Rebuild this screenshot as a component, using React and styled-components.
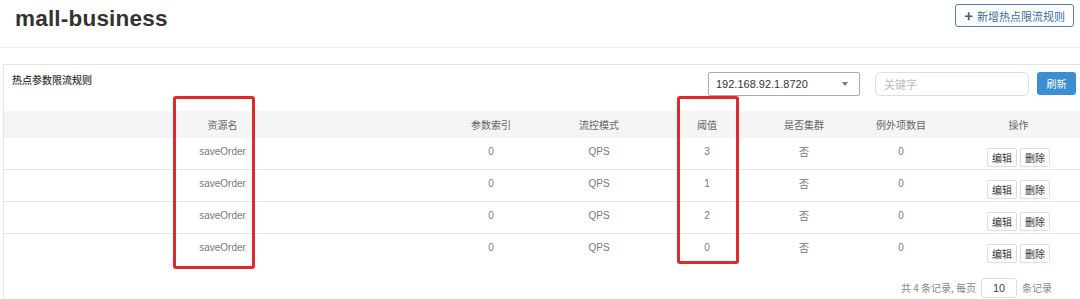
import React from 'react'
import styled, { createGlobalStyle } from 'styled-components'

const GlobalStyle = createGlobalStyle`
  body {
    margin: 0;
    background: #fff;
    font-family: 'Liberation Sans', 'Noto Sans CJK SC', sans-serif;
    color: #333;
  }
`

const Page = styled.div`
  width: 1080px;
  height: 299px;
  overflow: hidden;
  position: relative;
`

const Header = styled.div`
  height: 47px;
  border-bottom: 1px solid #eee;
  display: flex;
  justify-content: space-between;
  align-items: flex-start;
  padding: 0 6px 0 15px;
`

const Title = styled.h1`
  margin: 6px 0 0;
  font-size: 22.5px;
  font-weight: bold;
  color: #333;
  letter-spacing: 0.2px;
`

const AddButton = styled.button`
  margin-top: 4px;
  height: 23px;
  padding: 0 8px;
  display: flex;
  align-items: center;
  gap: 4px;
  background: #fff;
  border: 1px solid #5d7c9c;
  border-radius: 3px;
  color: #3a6a9c;
  font-family: 'Noto Sans CJK SC', sans-serif;
  font-size: 11px;
`

const Plus = styled.span`
  font-size: 15px;
  font-weight: bold;
  line-height: 1;
  color: #3a5f88;
`

const Panel = styled.div`
  position: relative;
  margin: 16px 0 0 3px;
  border: 1px solid #e3e3e3;
  border-right: none;
  border-bottom: none;
  height: 240px;
`

const PanelHead = styled.div`
  display: flex;
  align-items: flex-start;
  padding: 7px 4px 0 8px;
  height: 39px;
`

const PanelTitle = styled.div`
  flex: 1;
  font-family: 'Noto Sans CJK SC', sans-serif;
  font-size: 10px;
  font-weight: 500;
  color: #333;
  line-height: 16px;
`

const Select = styled.div`
  width: 152px;
  height: 24px;
  border: 1px solid #aab;
  border-radius: 2px;
  display: flex;
  align-items: center;
  justify-content: space-between;
  padding: 0 11px 0 7px;
  box-sizing: border-box;
  font-size: 11px;
  color: #333;
`

const Caret = styled.span`
  width: 0;
  height: 0;
  border-left: 3.5px solid transparent;
  border-right: 3.5px solid transparent;
  border-top: 4px solid #777;
`

const Search = styled.div`
  width: 154px;
  height: 24px;
  margin-left: 15px;
  border: 1px solid #ddd;
  border-radius: 6px;
  box-sizing: border-box;
  display: flex;
  align-items: center;
  padding-left: 8px;
  font-family: 'Noto Sans CJK SC', sans-serif;
  font-size: 11px;
  color: #bbb;
`

const Refresh = styled.button`
  margin-left: 8px;
  height: 23px;
  width: 39px;
  border: none;
  border-radius: 3px;
  background: #3d8dd1;
  color: #fff;
  font-family: 'Noto Sans CJK SC', sans-serif;
  font-size: 10px;
  padding: 0;
`

const Table = styled.table`
  border-collapse: collapse;
  table-layout: fixed;
  width: 1082px;
  font-size: 10px;
  color: #777;
`

const Th = styled.th`
  width: ${(p) => p.w}px;
  height: 26px;
  background: #f5f5f5;
  font-family: 'Noto Sans CJK SC', sans-serif;
  font-weight: normal;
  color: #666;
  text-align: center;
  padding: 0;
`

const Tr = styled.tr`
  border-top: 1px solid ${(p) => (p.first ? 'transparent' : '#e6e6e6')};
`

const Td = styled.td`
  height: 32px;
  text-align: center;
  vertical-align: top;
  padding: 7px 0 0;
  box-sizing: border-box;
  line-height: 13px;
  font-family: ${(p) => (p.cjk ? "'Noto Sans CJK SC', sans-serif" : "'Liberation Sans', sans-serif")};
`

const Actions = styled.div`
  display: flex;
  justify-content: center;
  gap: 3px;
  margin-top: 3px;
`

const SmallBtn = styled.button`
  height: 19px;
  padding: 0 4px;
  background: #fff;
  border: 1px solid #ddd;
  border-radius: 2px;
  font-family: 'Noto Sans CJK SC', sans-serif;
  font-size: 10px;
  color: #333;
`

const Footer = styled.div`
  display: flex;
  justify-content: flex-end;
  align-items: center;
  gap: 5px;
  padding: 12px 28px 0 0;
  font-family: 'Noto Sans CJK SC', sans-serif;
  font-size: 10px;
  color: #888;
`

const PageSize = styled.div`
  width: 36px;
  height: 20px;
  border: 1px solid #ddd;
  border-radius: 3px;
  box-sizing: border-box;
  display: flex;
  align-items: center;
  justify-content: center;
  font-family: 'Liberation Sans', sans-serif;
  font-size: 11px;
  color: #444;
`

const Mark = styled.div`
  position: absolute;
  left: ${(p) => p.x}px;
  top: ${(p) => p.y}px;
  width: ${(p) => p.w}px;
  height: ${(p) => p.h}px;
  border: 3px solid #dc2a2e;
  border-radius: 3px;
  box-sizing: border-box;
  pointer-events: none;
`

const columns = [
  { title: '资源名', w: 437 },
  { title: '参数索引', w: 100 },
  { title: '流控模式', w: 116 },
  { title: '阈值', w: 100 },
  { title: '是否集群', w: 94 },
  { title: '例外项数目', w: 100 },
  { title: '操作', w: 135 },
]

const rules = [
  { resource: 'saveOrder', index: 0, mode: 'QPS', count: 3, cluster: '否', items: 0 },
  { resource: 'saveOrder', index: 0, mode: 'QPS', count: 1, cluster: '否', items: 0 },
  { resource: 'saveOrder', index: 0, mode: 'QPS', count: 2, cluster: '否', items: 0 },
  { resource: 'saveOrder', index: 0, mode: 'QPS', count: 0, cluster: '否', items: 0 },
]

const App = () => {
  return (
    <Page>
      <GlobalStyle />
      <Header>
        <Title>mall-business</Title>
        <AddButton>
          <Plus>+</Plus>新增热点限流规则
        </AddButton>
      </Header>
      <Panel>
        <PanelHead>
          <PanelTitle>热点参数限流规则</PanelTitle>
          <Select>
            192.168.92.1.8720
            <Caret />
          </Select>
          <Search>关键字</Search>
          <Refresh>刷新</Refresh>
        </PanelHead>
        <Table>
          <thead>
            <tr>
              {columns.map((c) => (
                <Th key={c.title} w={c.w}>
                  {c.title}
                </Th>
              ))}
            </tr>
          </thead>
          <tbody>
            {rules.map((r, i) => (
              <Tr key={i} first={i === 0}>
                <Td>{r.resource}</Td>
                <Td>{r.index}</Td>
                <Td>{r.mode}</Td>
                <Td>{r.count}</Td>
                <Td cjk>{r.cluster}</Td>
                <Td>{r.items}</Td>
                <Td>
                  <Actions>
                    <SmallBtn>编辑</SmallBtn>
                    <SmallBtn>删除</SmallBtn>
                  </Actions>
                </Td>
              </Tr>
            ))}
          </tbody>
        </Table>
        <Footer>
          共 4 条记录, 每页
          <PageSize>10</PageSize>
          条记录
        </Footer>
        <Mark x={169} y={31} w={82} h={173} />
        <Mark x={673} y={31} w={62} h={168} />
      </Panel>
    </Page>
  )
}

export default App
